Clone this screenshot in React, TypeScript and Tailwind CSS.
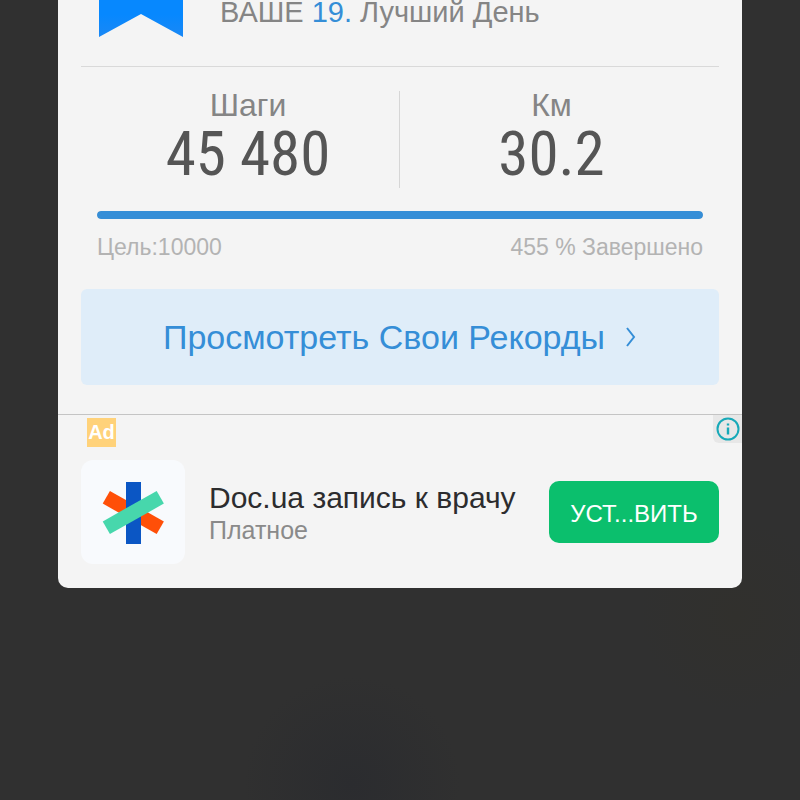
import React from 'react';

interface Stat {
  label: string;
  value: string;
}

const STATS: Stat[] = [
  { label: 'Шаги', value: '45 480' },
  { label: 'Км', value: '30.2' },
];

const GOAL = 10000;
const PERCENT = 455;

const Ribbon = () => (
  <svg width="84" height="37" viewBox="0 0 84 37" aria-hidden="true">
    <defs>
      <linearGradient id="ribbon" x1="0" y1="0" x2="0" y2="1">
        <stop offset="0.4" stopColor="#0788fe" />
        <stop offset="1" stopColor="#1a88f5" />
      </linearGradient>
    </defs>
    <path d="M0 0H84V37L42 14L0 37Z" fill="url(#ribbon)" />
  </svg>
);

const DocLogo = () => (
  <svg width="104" height="104" viewBox="0 0 104 104" aria-hidden="true">
    <rect x="-31" y="-7.3" width="62" height="14.6" transform="translate(52.3 52.5) rotate(29.5)" fill="#ff4f08" />
    <rect x="45" y="22" width="15" height="62" fill="#0b56c4" />
    <rect x="-31" y="-7.3" width="62" height="14.6" transform="translate(52.3 52.5) rotate(-29.5)" fill="#47d7ac" />
  </svg>
);

const StatsRow = () => (
  <div className="grid grid-cols-2 divide-x divide-[#d6d6d6] px-4 pt-6">
    {STATS.map((stat) => (
      <div key={stat.label} className="flex h-[97px] flex-col items-center">
        <span className="text-[32px] leading-[29px] text-[#858585]">{stat.label}</span>
        <span className="font-['Roboto_Condensed',Roboto,sans-serif] text-[61px] leading-[69px] text-[#555]">
          {stat.value}
        </span>
      </div>
    ))}
  </div>
);

const Progress = () => (
  <div className="px-4 pt-[23px]">
    <div
      role="progressbar"
      aria-label="Цель"
      aria-valuenow={100}
      className="h-2 overflow-hidden rounded-full bg-[#d5d5d5]"
    >
      <div className="h-full rounded-full bg-[#358ed7]" style={{ width: `${Math.min(PERCENT, 100)}%` }} />
    </div>
    <div className="flex justify-between pt-[14px] text-[23px] leading-[28px] text-[#b3b3b3]">
      <span>Цель:{GOAL}</span>
      <span>{PERCENT} % Завершено</span>
    </div>
  </div>
);

const AdBanner = () => (
  <section className="relative border-t border-[#c4c4c4] px-[23px] pt-[3px] pb-6">
    <span className="ml-[6px] flex size-[29px] items-center justify-center bg-[#ffd27a] text-[20px] leading-[29px] font-bold text-white">
      Ad
    </span>
    <button aria-label="Ad info" className="absolute top-0 right-0 flex h-7 w-[29px] items-center justify-center rounded-bl-md bg-[#e7e7e7]">
      <svg width="24" height="24" viewBox="0 0 24 24" fill="none" stroke="#17a9b8" strokeWidth="2" aria-hidden="true">
        <circle cx="12" cy="12" r="10.5" />
        <path d="M12 10.5V17.5M12 6.4V8.6" strokeWidth="2.4" />
      </svg>
    </button>
    <div className="flex items-center pt-[13px]">
      <div className="size-[104px] shrink-0 overflow-hidden rounded-xl bg-[#f8fafd]">
        <DocLogo />
      </div>
      <div className="min-w-0 flex-1 pt-1 pl-6">
        <h2 className="text-[30px] leading-8 whitespace-nowrap text-[#2c2c2e]">Doc.ua запись к врачу</h2>
        <p className="text-[25px] leading-8 text-[#8a8a8a]">Платное</p>
      </div>
      <button className="h-[62px] w-[170px] shrink-0 rounded-[10px] bg-[#0bbf6d] pt-1 text-[24px] font-medium text-white">
        УСТ...ВИТЬ
      </button>
    </div>
  </section>
);

const App: React.FC = () => {
  return (
    <div className="min-h-screen bg-[#303030] bg-[radial-gradient(circle_at_44%_98%,#2b2c2f,transparent_12%),radial-gradient(circle_at_92%_77%,#31302d,transparent_10%)] font-['Liberation_Sans',Arial,sans-serif]">
      <main className="mx-[58px] overflow-hidden rounded-b-[10px] bg-[#f4f4f4]">
        <div className="px-[23px] pb-[29px]">
          <header className="flex h-[67px] items-start border-b border-[#d9d9d9] pl-[18px]">
            <Ribbon />
            <h1 className="pl-[37px] text-[29px] leading-[24px] text-[#858585]">
              ВАШЕ <span className="text-[#358ed7]">19.</span> Лучший День
            </h1>
          </header>
          <StatsRow />
          <Progress />
          <a
            href="#records"
            className="mt-7 flex h-24 items-center justify-center gap-5 rounded-md bg-[#dfedf9] text-[34px] text-[#358ed7]"
          >
            Просмотреть Свои Рекорды
            <svg width="12" height="20" viewBox="0 0 12 20" fill="none" stroke="currentColor" strokeWidth="2" aria-hidden="true">
              <path d="M2 1L9 10L2 19" />
            </svg>
          </a>
        </div>
        <AdBanner />
      </main>
    </div>
  );
};

export default App;
